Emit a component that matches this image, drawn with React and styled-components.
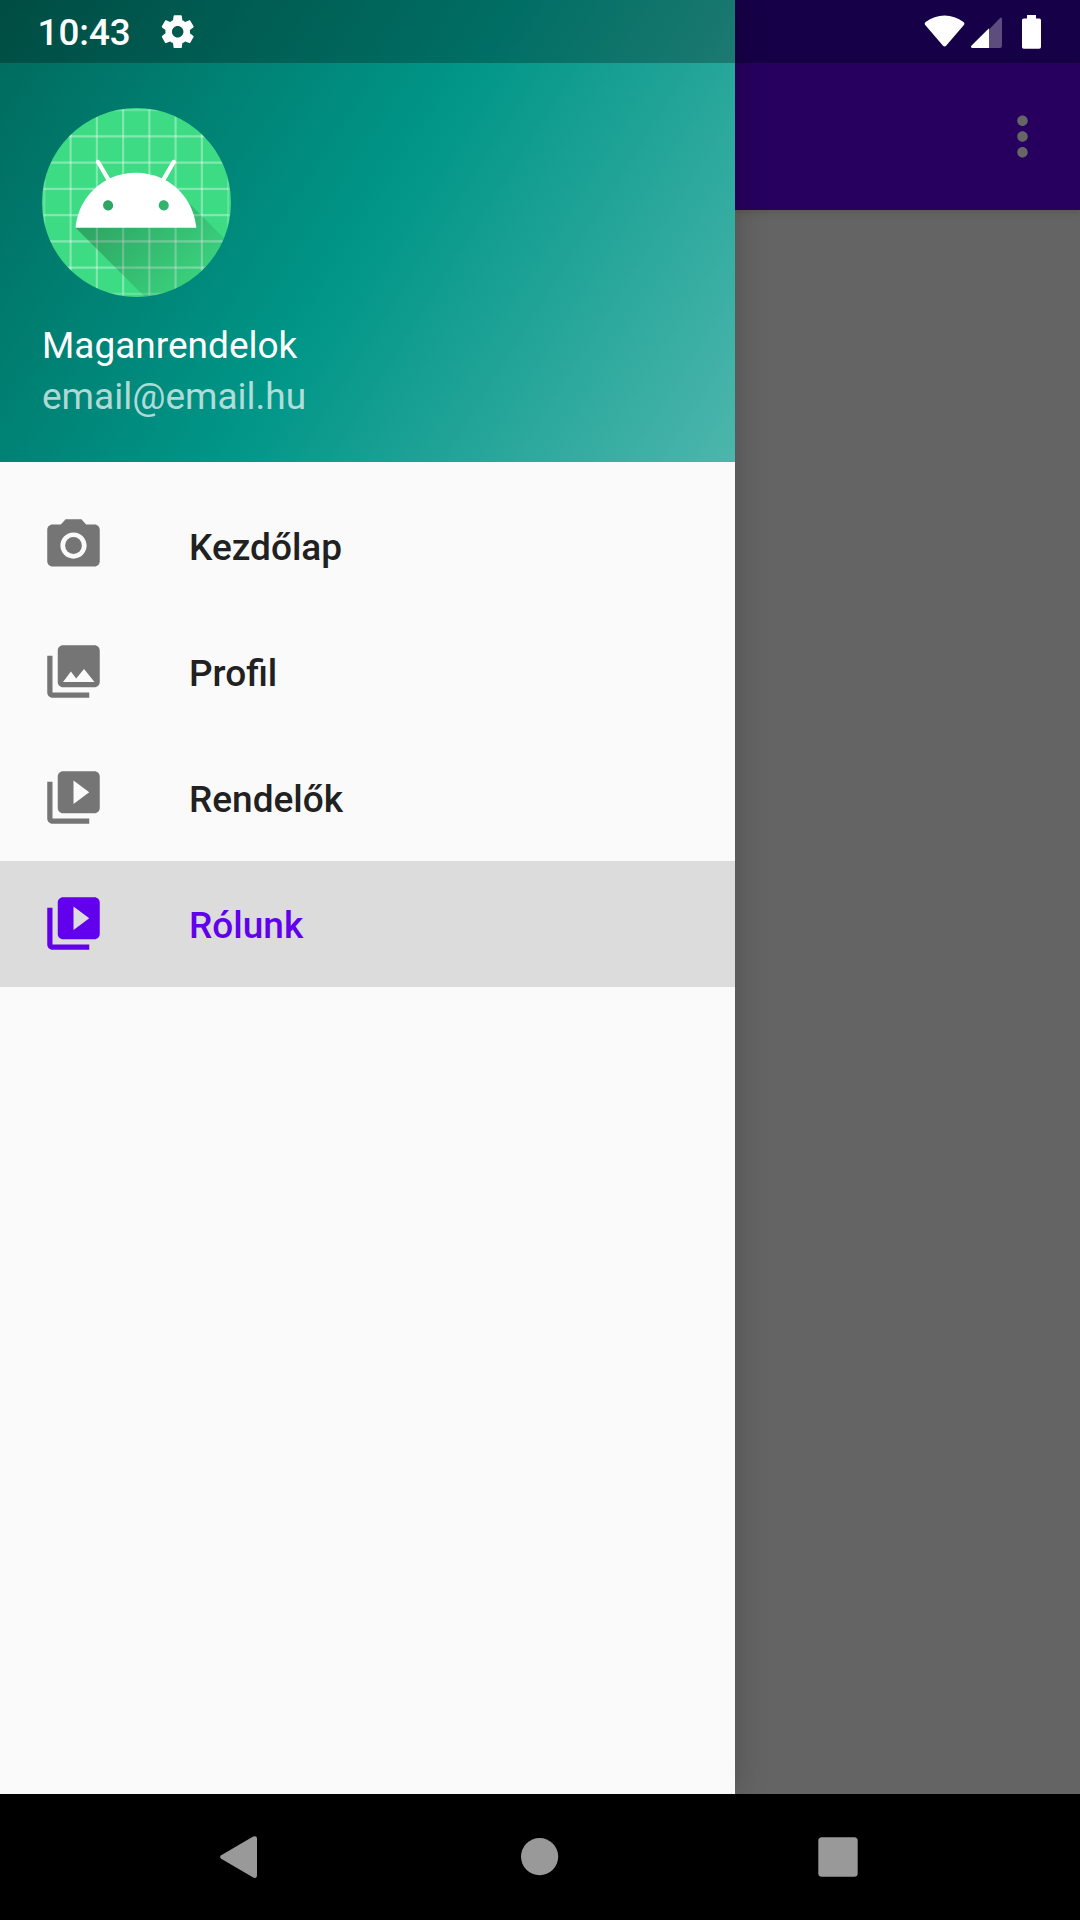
import React from 'react';
import styled, { createGlobalStyle } from 'styled-components';

const GlobalStyle = createGlobalStyle`
  *, *::before, *::after { box-sizing: border-box; }
  body { margin: 0; background: #000; }
  svg { display: block; flex: none; }
`;

const Screen = styled.div`
  position: relative;
  display: flex;
  flex-direction: column;
  width: 1080px;
  height: 1920px;
  overflow: hidden;
  font-family: Roboto, 'Noto Sans', sans-serif;
  font-size: 37px;
`;

const StatusBar = styled.header`
  position: absolute;
  inset: 0 0 auto 0;
  z-index: 3;
  display: flex;
  align-items: center;
  height: 63px;
  padding: 0 38px 0 37.5px;
  color: #fff;
`;

const Clock = styled.time`
  font-size: 36.75px;
  font-weight: 500;
  line-height: 60px;
  padding-top: 3px;
`;

const StatusNotification = styled.div`
  margin-left: 27px;
`;

const StatusSystem = styled.div`
  display: flex;
  margin-left: auto;
`;

const Body = styled.div`
  display: flex;
  flex: 1;
  overflow: hidden;
`;

const Drawer = styled.aside`
  position: relative;
  z-index: 2;
  flex: none;
  width: 735px;
  background: #fafafa;
  box-shadow: 0 0 32px rgba(0, 0, 0, 0.2);
`;

const DrawerHeader = styled.div`
  height: 462px;
  background: linear-gradient(122.15deg, #00695c 0%, #009688 50%, #4db6ac 100%);
`;

const DrawerInset = styled.div`
  height: 63px;
  background: rgba(0, 0, 0, 0.267);
`;

const Account = styled.div`
  display: flex;
  flex-direction: column;
  padding: 45px 42px 0;
`;

const AccountLine = styled.div`
  margin-top: ${(p) => (p.$first ? '24px' : '0')};
  line-height: ${(p) => (p.$first ? '50px' : '52px')};
  color: ${(p) => (p.$muted ? 'rgba(255, 255, 255, 0.7)' : '#fff')};
`;

const Menu = styled.nav`
  display: flex;
  flex-direction: column;
  padding-top: 21px;
`;

const MenuItem = styled.a`
  display: flex;
  align-items: center;
  gap: 84px;
  height: 126px;
  padding: 0 42px;
  font-weight: 500;
  color: ${(p) => (p.$active ? '#6200ee' : '#212121')};
  background: ${(p) => (p.$active ? '#dcdcdc' : 'transparent')};

  svg {
    margin-bottom: 1px;
    fill: ${(p) => (p.$active ? '#6200ee' : '#757575')};
  }
`;

const MenuLabel = styled.span`
  padding-top: 3px;
`;

const Page = styled.main`
  display: flex;
  flex-direction: column;
  flex: 1;
  background: #646464;
`;

const PageInset = styled.div`
  height: 63px;
  background: #160047;
`;

const AppBar = styled.div`
  display: flex;
  align-items: center;
  justify-content: flex-end;
  height: 147px;
  padding-right: 26px;
  background: #27005f;
  box-shadow: 0 2px 8px rgba(0, 0, 0, 0.14);
`;

const NavBar = styled.footer`
  display: flex;
  align-items: center;
  justify-content: center;
  height: 126px;
  background: #000;
`;

const NavButton = styled.div`
  display: flex;
  justify-content: center;
  width: 300px;
`;

const icons = {
  camera: (
    <>
      <circle cx="12" cy="12" r="3.2" />
      <path d="M9 2L7.17 4H4c-1.1 0-2 .9-2 2v12c0 1.1.9 2 2 2h16c1.1 0 2-.9 2-2V6c0-1.1-.9-2-2-2h-3.17L15 2H9zm3 15c-2.76 0-5-2.24-5-5s2.24-5 5-5 5 2.24 5 5-2.24 5-5 5z" />
    </>
  ),
  gallery: (
    <path d="M22 16V4c0-1.1-.9-2-2-2H8c-1.1 0-2 .9-2 2v12c0 1.1.9 2 2 2h12c1.1 0 2-.9 2-2zm-11-4l2.03 2.71L16 11l4 5H8l3-4zM2 6v14c0 1.1.9 2 2 2h14v-2H4V6H2z" />
  ),
  video: (
    <path d="M4 6H2v14c0 1.1.9 2 2 2h14v-2H4V6zm16-4H8c-1.1 0-2 .9-2 2v12c0 1.1.9 2 2 2h12c1.1 0 2-.9 2-2V4c0-1.1-.9-2-2-2zm-8 12.5v-9l6 4.5-6 4.5z" />
  ),
  more: (
    <path d="M12 8c1.1 0 2-.9 2-2s-.9-2-2-2-2 .9-2 2 .9 2 2 2zm0 2c-1.1 0-2 .9-2 2s.9 2 2 2 2-.9 2-2-.9-2-2-2zm0 6c-1.1 0-2 .9-2 2s.9 2 2 2 2-.9 2-2-.9-2-2-2z" />
  ),
  settings: (
    <path d="M19.43 12.98c.04-.32.07-.64.07-.98s-.03-.66-.07-.98l2.11-1.65c.19-.15.24-.42.12-.64l-2-3.46c-.12-.22-.39-.3-.61-.22l-2.49 1c-.52-.4-1.08-.73-1.69-.98l-.38-2.65C14.46 2.18 14.25 2 14 2h-4c-.25 0-.46.18-.49.42l-.38 2.65c-.61.25-1.17.59-1.69.98l-2.49-1c-.23-.09-.49 0-.61.22l-2 3.46c-.13.22-.07.49.12.64l2.11 1.65c-.04.32-.07.65-.07.98s.03.66.07.98l-2.11 1.65c-.19.15-.24.42-.12.64l2 3.46c.12.22.39.3.61.22l2.49-1c.52.4 1.08.73 1.69.98l.38 2.65c.03.24.24.42.49.42h4c.25 0 .46-.18.49-.42l.38-2.65c.61-.25 1.17-.59 1.69-.98l2.49 1c.23.09.49 0 .61-.22l2-3.46c.12-.22.07-.49-.12-.64l-2.11-1.65zM12 15.5c-1.93 0-3.5-1.57-3.5-3.5s1.57-3.5 3.5-3.5 3.5 1.57 3.5 3.5-1.57 3.5-3.5 3.5z" />
  ),
};

const Icon = ({ name, size = 63, fill }) => (
  <svg width={size} height={size} viewBox="0 0 24 24" fill={fill}>
    {icons[name]}
  </svg>
);

const outerLines = [9, 19, 29, 39, 49, 59, 69, 79, 89, 99];
const innerLines = [29, 39, 49, 59, 69, 79];

const Avatar = () => (
  <svg width="189" height="189" viewBox="18 18 72 72">
    <defs>
      <clipPath id="avatarClip">
        <circle cx="54" cy="54" r="36" />
      </clipPath>
      <linearGradient id="avatarShade" gradientUnits="userSpaceOnUse" x1="42.95" y1="49.6" x2="85.85" y2="92.5">
        <stop offset="0" stopColor="#000" stopOpacity="0.267" />
        <stop offset="1" stopColor="#000" stopOpacity="0" />
      </linearGradient>
    </defs>
    <g clipPath="url(#avatarClip)">
      <path fill="#3ddc84" d="M0 0h108v108H0z" />
      <g stroke="#fff" strokeOpacity="0.2" strokeWidth="0.8" transform="translate(-0.1 -0.2)">
        {outerLines.map((n) => (
          <React.Fragment key={n}>
            <path d={`M${n} 0V108`} />
            <path d={`M0 ${n}H108`} />
          </React.Fragment>
        ))}
        {innerLines.map((n) => (
          <React.Fragment key={n}>
            <path d={`M${n} 19V89`} />
            <path d={`M19 ${n}H89`} />
          </React.Fragment>
        ))}
      </g>
      <g transform="translate(-0.2 -0.32)">
        <path
          fill="url(#avatarShade)"
          d="M31 63.928c0 0 6.4-11 12.1-13.1 7.2-2.6 26-1.4 26-1.4l38.1 38.1L107 108.928l-32-1L31 63.928z"
        />
        <path
          fill="#fff"
          d="M65.3 45.828l3.8-6.6c.2-.4.1-.9-.3-1.1-.4-.2-.9-.1-1.1.3l-3.9 6.7c-6.3-2.8-13.4-2.8-19.7 0l-3.9-6.7c-.2-.4-.7-.5-1.1-.3C38.8 38.328 38.7 38.828 38.9 39.228l3.8 6.6C36.2 49.428 31.7 56.028 31 63.928h46C76.3 56.028 71.8 49.428 65.3 45.828zM43.4 57.328c-.8 0-1.5-.5-1.8-1.2-.3-.7-.1-1.5.4-2.1.5-.5 1.4-.7 2.1-.4.7.3 1.2 1 1.2 1.8C45.3 56.528 44.5 57.328 43.4 57.328zM64.6 57.328c-.8 0-1.5-.5-1.8-1.2s-.1-1.5.4-2.1c.5-.5 1.4-.7 2.1-.4.7.3 1.2 1 1.2 1.8C66.5 56.528 65.6 57.328 64.6 57.328z"
        />
      </g>
    </g>
  </svg>
);

const SystemIcons = () => (
  <svg width="122" height="40" viewBox="920 11 122 40" fill="#fff">
    <path d="M925 23.700Q924 22 925.600 21C936.700 12.300 952.400 12.300 963.500 21Q965.100 22 964.100 23.700L946.100 44.800Q944.500 46.300 943 44.800Z" />
    <path fillOpacity="0.3" d="M989 28.500 999.600 17.400q2.400-1.900 2.400.8V45q0 2-2 2H989z" />
    <path d="M989 27.300V47H972.500q-2.300-.5-1.200-2.300z" />
    <path d="M1027 14h9v3.500h3.200q1.800 0 1.800 1.800V46q0 1.800-1.800 1.800h-15.400q-1.800 0-1.800-1.800V19.300q0-1.800 1.800-1.800h3.200z" />
  </svg>
);

const BackGlyph = () => (
  <svg width="40" height="42" viewBox="0 0 40 42" fill="#999">
    <path d="M33.200.6Q37-.9 37 3V39Q37 43 33.200 41.500L1.200 22.700Q-1 21 1.200 19.200z" />
  </svg>
);

const HomeGlyph = () => (
  <svg width="38" height="38" viewBox="0 0 38 38" fill="#999">
    <circle cx="18.600" cy="18.600" r="18.600" />
  </svg>
);

const RecentsGlyph = () => (
  <svg width="44" height="40" viewBox="0 0 44 40" fill="#999">
    <rect x="0.300" y="0.300" width="39.400" height="39.400" rx="3.500" />
  </svg>
);

const menuItems = [
  { label: 'Kezdőlap', icon: 'camera' },
  { label: 'Profil', icon: 'gallery' },
  { label: 'Rendelők', icon: 'video' },
  { label: 'Rólunk', icon: 'video', active: true },
];

export default function App() {
  return (
    <Screen>
      <GlobalStyle />
      <StatusBar>
        <Clock>10:43</Clock>
        <StatusNotification>
          <Icon name="settings" size={39.4} fill="#fff" />
        </StatusNotification>
        <StatusSystem>
          <SystemIcons />
        </StatusSystem>
      </StatusBar>
      <Body>
        <Drawer>
          <DrawerHeader>
            <DrawerInset />
            <Account>
              <Avatar />
              <AccountLine $first>Maganrendelok</AccountLine>
              <AccountLine $muted>email@email.hu</AccountLine>
            </Account>
          </DrawerHeader>
          <Menu>
            {menuItems.map((item) => (
              <MenuItem key={item.label} $active={item.active}>
                <Icon name={item.icon} />
                <MenuLabel>{item.label}</MenuLabel>
              </MenuItem>
            ))}
          </Menu>
        </Drawer>
        <Page>
          <PageInset />
          <AppBar>
            <Icon name="more" fill="#666" />
          </AppBar>
        </Page>
      </Body>
      <NavBar>
        <NavButton><BackGlyph /></NavButton>
        <NavButton><HomeGlyph /></NavButton>
        <NavButton><RecentsGlyph /></NavButton>
      </NavBar>
    </Screen>
  );
}
